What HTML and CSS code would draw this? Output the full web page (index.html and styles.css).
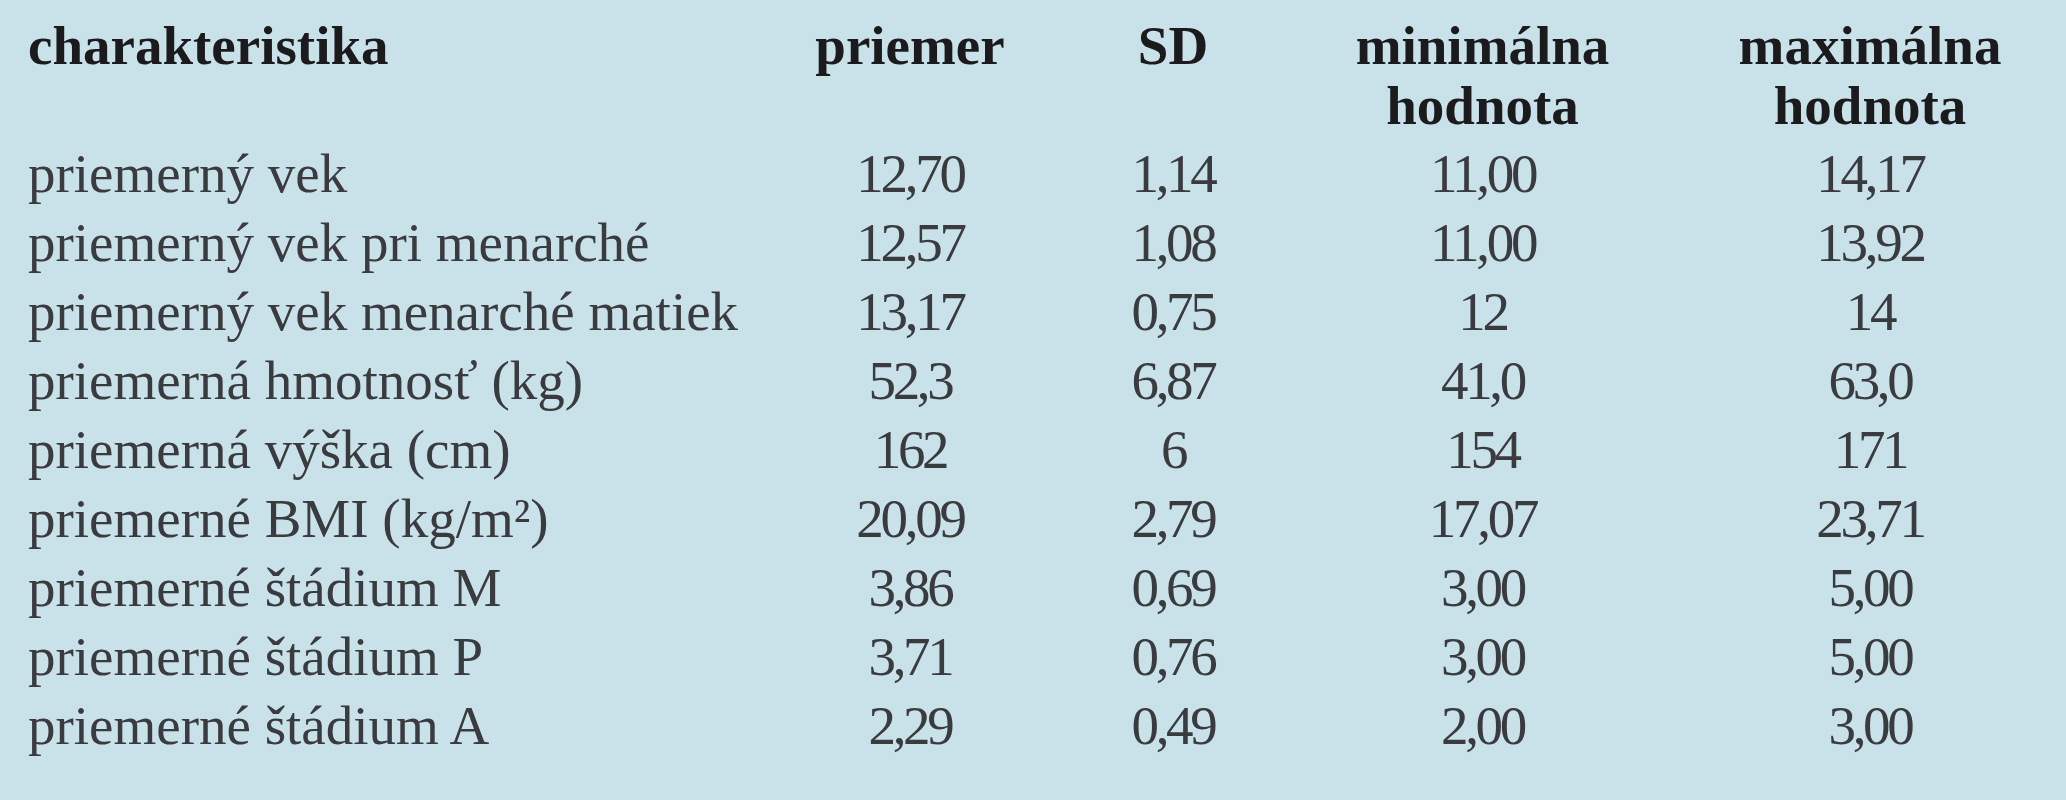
FILE: index.html
```html
<!DOCTYPE html>
<html lang="sk">
<head>
<meta charset="utf-8">
<title>charakteristika</title>
<link rel="stylesheet" href="styles.css">
</head>
<body>
<table class="stats">
  <colgroup>
    <col class="c-name">
    <col class="c-mean">
    <col class="c-sd">
    <col class="c-min">
    <col class="c-max">
  </colgroup>
  <thead>
    <tr>
      <th class="name">charakteristika</th>
      <th>priemer</th>
      <th>SD</th>
      <th class="min">minimálna hodnota</th>
      <th>maximálna hodnota</th>
    </tr>
  </thead>
  <tbody>
    <tr><td class="name">priemerný vek</td><td>12,70</td><td>1,14</td><td class="min">11,00</td><td>14,17</td></tr>
    <tr><td class="name">priemerný vek pri menarché</td><td>12,57</td><td>1,08</td><td class="min">11,00</td><td>13,92</td></tr>
    <tr><td class="name">priemerný vek menarché matiek</td><td>13,17</td><td>0,75</td><td class="min">12</td><td>14</td></tr>
    <tr><td class="name">priemerná hmotnosť (kg)</td><td>52,3</td><td>6,87</td><td class="min">41,0</td><td>63,0</td></tr>
    <tr><td class="name">priemerná výška (cm)</td><td>162</td><td>6</td><td class="min">154</td><td>171</td></tr>
    <tr><td class="name">priemerné BMI (kg/m²)</td><td>20,09</td><td>2,79</td><td class="min">17,07</td><td>23,71</td></tr>
    <tr><td class="name">priemerné štádium M</td><td>3,86</td><td>0,69</td><td class="min">3,00</td><td>5,00</td></tr>
    <tr><td class="name">priemerné štádium P</td><td>3,71</td><td>0,76</td><td class="min">3,00</td><td>5,00</td></tr>
    <tr><td class="name">priemerné štádium A</td><td>2,29</td><td>0,49</td><td class="min">2,00</td><td>3,00</td></tr>
  </tbody>
</table>
</body>
</html>
```

FILE: styles.css
```css
html, body {
  margin: 0;
  padding: 0;
  background: #c9e1e9;
}

body {
  width: 2066px;
  height: 800px;
  overflow: hidden;
  padding: 16px 0 0 28px;
  box-sizing: border-box;
  font-family: "Liberation Serif", "Times New Roman", serif;
  font-size: 55px;
  color: #3a3b3e;
}

.stats {
  border-collapse: collapse;
  border-spacing: 0;
  table-layout: fixed;
  width: 2032px;
}

.c-name { width: 751px; }
.c-mean { width: 262px; }
.c-sd   { width: 264px; }
.c-min  { width: 375px; }
.c-max  { width: 380px; }

.stats th,
.stats td {
  padding: 0;
  text-align: center;
  white-space: normal;
}

.stats th {
  font-weight: bold;
  color: #1b1b1d;
  line-height: 60px;
  vertical-align: top;
  padding-bottom: 3px;
}

.stats td {
  height: 69px;
  line-height: 69px;
  vertical-align: top;
  letter-spacing: -0.06em;
}

.stats .name {
  text-align: left;
  letter-spacing: 0;
}

.stats .min {
  padding-right: 20px;
}
```
